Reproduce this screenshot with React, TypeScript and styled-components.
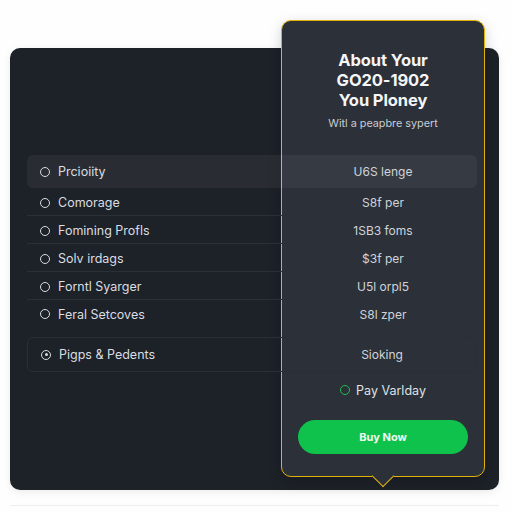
import React from "react";
import styled, { createGlobalStyle } from "styled-components";

const GlobalStyle = createGlobalStyle`
  html, body {
    margin: 0;
    padding: 0;
    background: #fefefe;
    font-family: Inter, "Noto Sans", "Liberation Sans", sans-serif;
  }
`;

const Page = styled.div`
  width: 512px;
  height: 512px;
  padding: 48px 13px 0 10px;
  box-sizing: border-box;
`;

const Panel = styled.div`
  position: relative;
  height: 442px;
  background: #1d2128;
  border-radius: 10px;
  padding: 107px 22px 0 17px;
  box-sizing: border-box;
  box-shadow: 0 2px 8px rgba(0, 0, 0, 0.08);
`;

const Footer = styled.div`
  margin-top: 15px;
  height: 1px;
  background: #eeeeee;
`;

const Popover = styled.div`
  position: absolute;
  left: 271px;
  top: -28px;
  width: 204px;
  height: 457px;
  box-sizing: border-box;
  background: #2b3039;
  border: 1.5px solid #e3b20a;
  border-radius: 10px;
  display: flex;
  flex-direction: column;
  align-items: center;
  padding: 29px 16px 22px;
  box-shadow: 0 4px 14px rgba(0, 0, 0, 0.18);
  z-index: 0;
`;

const Pointer = styled.div`
  position: absolute;
  left: 50%;
  bottom: -8px;
  width: 15px;
  height: 15px;
  margin-left: -8px;
  background: #2b3039;
  border-right: 1.5px solid #e3b20a;
  border-bottom: 1.5px solid #e3b20a;
  transform: rotate(45deg);
`;

const Title = styled.h2`
  margin: 0;
  font-size: 16.5px;
  line-height: 20px;
  font-weight: 700;
  color: #f4f5f7;
  text-align: center;
  letter-spacing: -0.1px;
`;

const Subtitle = styled.p`
  margin: 7px 0 0;
  font-size: 10.8px;
  line-height: 14px;
  color: #c9cdd3;
  text-align: center;
`;

const Bottom = styled.div`
  margin-top: auto;
  width: 100%;
  display: flex;
  flex-direction: column;
  align-items: center;
`;

const PayRow = styled.div`
  display: flex;
  align-items: center;
  gap: 6px;
  height: 16px;
  font-size: 12.5px;
  color: #dfe2e6;
  margin-bottom: 22px;
`;

const Dot = styled.span<{ $color: string; $fill?: boolean }>`
  width: 10px;
  height: 10px;
  box-sizing: border-box;
  border-radius: 50%;
  border: 1.5px solid ${(p) => p.$color};
  flex-shrink: 0;
  display: inline-flex;
  align-items: center;
  justify-content: center;
  &::after {
    content: "";
    width: 3px;
    height: 3px;
    border-radius: 50%;
    background: ${(p) => (p.$fill ? p.$color : "transparent")};
  }
`;

const BuyButton = styled.button`
  width: 100%;
  height: 34px;
  border: none;
  border-radius: 17px;
  background: #0fc24b;
  color: #eef8f0;
  font-family: inherit;
  font-size: 11px;
  font-weight: 700;
  cursor: pointer;
`;

const Rows = styled.div`
  position: relative;
  z-index: 1;
  display: flex;
  flex-direction: column;
`;

const Row = styled.div<{ $active?: boolean; $boxed?: boolean; $line?: boolean }>`
  display: grid;
  grid-template-columns: 1fr 188px;
  align-items: center;
  height: ${(p) => (p.$active ? "33px" : p.$boxed ? "35px" : "28px")};
  padding-left: 13px;
  padding-top: ${(p) => (p.$line ? "2px" : "0")};
  box-sizing: border-box;
  border-radius: ${(p) => (p.$active || p.$boxed ? "6px" : "0")};
  background: ${(p) => (p.$active ? "rgba(255,255,255,0.055)" : "transparent")};
  border: ${(p) => (p.$boxed ? "1px solid #2a2f36" : "none")};
  border-bottom: ${(p) =>
    p.$line ? "1px solid #2b3037" : p.$boxed ? "1px solid #2a2f36" : "none"};
  margin-top: ${(p) => (p.$boxed ? "9px" : "0")};
`;

const Label = styled.span`
  display: flex;
  align-items: center;
  gap: 8px;
  font-size: 12.5px;
  color: #dadde1;
`;

const Value = styled.span`
  text-align: center;
  font-size: 12px;
  color: #d0d4d9;
`;

const rows = [
  { label: "Prcioiity", value: "U6S lenge", active: true },
  { label: "Comorage", value: "S8f per", line: true },
  { label: "Fomining Profls", value: "1SB3 foms", line: true },
  { label: "Solv irdags", value: "$3f per", line: true },
  { label: "Forntl Syarger", value: "U5l orpl5", line: true },
  { label: "Feral Setcoves", value: "S8l zper" },
];

export default function App() {
  return (
    <>
      <GlobalStyle />
      <Page>
        <Panel>
          <Popover>
            <Title>
              About Your
              <br />
              GO20-1902
              <br />
              You Ploney
            </Title>
            <Subtitle>Witl a peapbre sypert</Subtitle>
            <Bottom>
              <PayRow>
                <Dot $color="#1fbd4c" />
                Pay Varlday
              </PayRow>
              <BuyButton>Buy Now</BuyButton>
            </Bottom>
            <Pointer />
          </Popover>
          <Rows>
            {rows.map((r) => (
              <Row key={r.label} $active={r.active} $line={r.line}>
                <Label>
                  <Dot $color="#d8dbe0" />
                  {r.label}
                </Label>
                <Value>{r.value}</Value>
              </Row>
            ))}
            <Row $boxed>
              <Label>
                <Dot $color="#d8dbe0" $fill />
                Pigps &amp; Pedents
              </Label>
              <Value>Sioking</Value>
            </Row>
          </Rows>
        </Panel>
        <Footer />
      </Page>
    </>
  );
}
